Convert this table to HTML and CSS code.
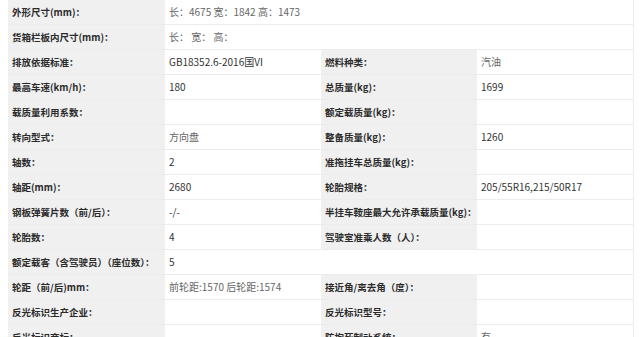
FILE: index.html
```html
<!DOCTYPE html>
<html lang="zh-CN">
<head>
<meta charset="utf-8">
<link rel="stylesheet" href="styles.css">
</head>
<body>
<table class="spec">
  <colgroup><col class="c1"><col class="c2"><col class="c3"><col class="c4"></colgroup>
  <tr><th>外形尺寸(mm)：</th><td colspan="3" class="soft">长：4675 宽：1842 高：1473</td></tr>
  <tr><th>货箱栏板内尺寸(mm)：</th><td colspan="3" class="soft">长： 宽： 高：</td></tr>
  <tr><th>排放依据标准：</th><td>GB18352.6-2016国VI</td><th>燃料种类：</th><td class="soft">汽油</td></tr>
  <tr><th>最高车速(km/h)：</th><td>180</td><th>总质量(kg)：</th><td>1699</td></tr>
  <tr><th>载质量利用系数：</th><td></td><th>额定载质量(kg)：</th><td></td></tr>
  <tr><th>转向型式：</th><td class="soft">方向盘</td><th>整备质量(kg)：</th><td>1260</td></tr>
  <tr><th>轴数：</th><td>2</td><th>准拖挂车总质量(kg)：</th><td></td></tr>
  <tr><th>轴距(mm)：</th><td>2680</td><th>轮胎规格：</th><td>205/55R16,215/50R17</td></tr>
  <tr><th>钢板弹簧片数（前/后）：</th><td>-/-</td><th>半挂车鞍座最大允许承载质量(kg)：</th><td></td></tr>
  <tr><th>轮胎数：</th><td>4</td><th>驾驶室准乘人数（人）：</th><td></td></tr>
  <tr><th>额定载客（含驾驶员）（座位数）：</th><td colspan="3">5</td></tr>
  <tr><th>轮距（前/后)mm：</th><td class="soft">前轮距:1570 后轮距:1574</td><th>接近角/离去角（度）：</th><td></td></tr>
  <tr><th>反光标识生产企业：</th><td></td><th>反光标识型号：</th><td></td></tr>
  <tr><th>反光标识商标：</th><td></td><th>防抱死制动系统：</th><td class="soft">有</td></tr>
</table>
</body>
</html>
```
FILE: styles.css
```css
html, body {
  margin: 0;
  padding: 0;
  background: #ffffff;
}
body {
  padding-left: 8px;
  font-family: "Noto Sans CJK SC", "Noto Sans", sans-serif;
  font-size: 10px;
  color: #333333;
}
.spec {
  border-collapse: collapse;
  width: 625px;
  table-layout: fixed;
  border-right: 1px solid #ececec;
}
.c1 { width: 157px; }
.c2 { width: 156px; }
.c3 { width: 156px; }
.c4 { width: 156px; }
.spec th,
.spec td {
  height: 24px;
  padding: 0 0 0 4px;
  border-bottom: 1px solid #ececec;
  text-align: left;
  vertical-align: middle;
  white-space: nowrap;
  overflow: hidden;
  line-height: 14px;
}
.spec th {
  background: #f0f0f0;
  font-size: 9.5px;
  font-weight: bold;
  color: #2b2b2b;
}
.spec td {
  background: #ffffff;
  font-weight: normal;
  color: #333333;
}
.spec td.soft {
  color: #666666;
}
```
